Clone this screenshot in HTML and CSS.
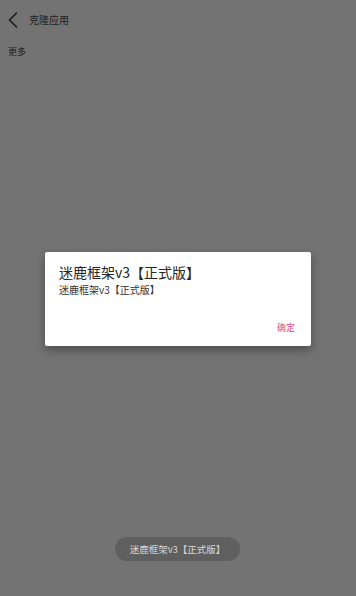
FILE: index.html
```html
<!DOCTYPE html>
<html lang="zh">
<head>
<meta charset="utf-8">
<link rel="stylesheet" href="styles.css">
</head>
<body>
<div class="page">
  <header class="bar">
    <svg class="back" width="12" height="18" viewBox="0 0 12 18"><path d="M9.5 2 L2.5 9 L9.5 16" fill="none" stroke="#1c1c1c" stroke-width="1.6" stroke-linecap="round" stroke-linejoin="round"/></svg>
    <span class="bar-title">克隆应用</span>
  </header>
  <div class="more">更多</div>
</div>
<div class="overlay">
  <div class="dialog">
    <div class="d-title">迷鹿框架v3【正式版】</div>
    <div class="d-msg">迷鹿框架v3【正式版】</div>
    <div class="d-actions"><span class="d-ok">确定</span></div>
  </div>
</div>
<div class="toast">迷鹿框架v3【正式版】</div>
</body>
</html>
```
FILE: styles.css
```css
html, body {
  margin: 0;
  padding: 0;
  height: 100%;
}
body {
  background: #737373;
  font-family: "Noto Sans CJK SC", "Noto Sans", sans-serif;
  color: #1c1c1c;
  overflow: hidden;
  position: relative;
}
.bar {
  display: flex;
  align-items: center;
  height: 40px;
  padding-left: 7px;
  gap: 10px;
}
.back {
  display: block;
}
.bar-title {
  font-size: 10px;
  line-height: 1;
  color: #1c1c1c;
}
.more {
  font-size: 9px;
  line-height: 1;
  padding-left: 8px;
  margin-top: 7px;
  color: #1c1c1c;
}
.overlay {
  position: absolute;
  inset: 0;
  display: flex;
  align-items: center;
  justify-content: center;
}
.dialog {
  width: 266px;
  height: 94px;
  box-sizing: border-box;
  background: #ffffff;
  border-radius: 2px;
  box-shadow: 0 4px 10px rgba(0,0,0,0.35);
  padding: 11px 14px 0 14px;
  display: flex;
  flex-direction: column;
  margin-top: 2px;
}
.d-title {
  font-size: 14px;
  line-height: 18px;
  color: #262626;
}
.d-msg {
  font-size: 10px;
  line-height: 14px;
  margin-top: 2px;
  color: #333333;
}
.d-actions {
  display: flex;
  justify-content: flex-end;
  margin-top: 25px;
  padding-right: 2px;
}
.d-ok {
  font-size: 9px;
  line-height: 12px;
  color: #e24a88;
}
.toast {
  position: absolute;
  left: 115px;
  top: 537px;
  width: 125px;
  height: 24px;
  border-radius: 12px;
  background: #5f5f5f;
  color: #d8d8d8;
  font-size: 9.5px;
  display: flex;
  align-items: center;
  justify-content: center;
}
```
